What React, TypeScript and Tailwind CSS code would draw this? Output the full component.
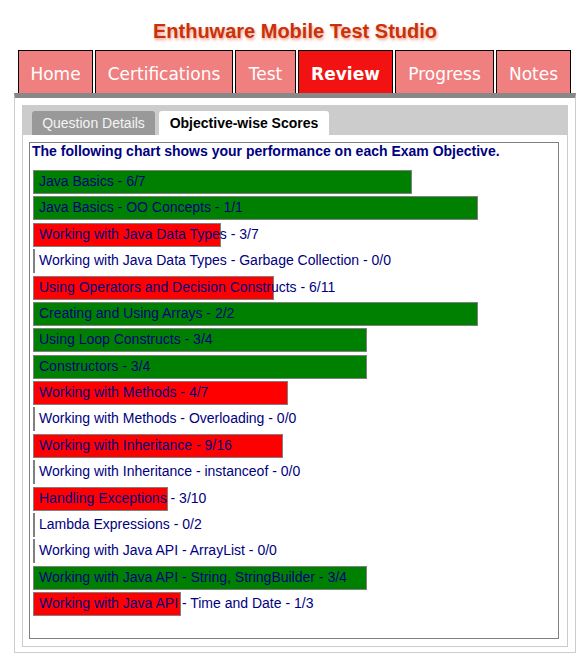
const tabs = [
  { label: 'Home', width: 'w-[75px]' },
  { label: 'Certifications', width: 'w-[138px]' },
  { label: 'Test', width: 'w-[61px]' },
  { label: 'Review', width: 'w-[95px]', active: true },
  { label: 'Progress', width: 'w-[99px]' },
  { label: 'Notes', width: 'w-[75px]' },
]

const objectives: [string, number, number][] = [
  ['Java Basics', 6, 7],
  ['Java Basics - OO Concepts', 1, 1],
  ['Working with Java Data Types', 3, 7],
  ['Working with Java Data Types - Garbage Collection', 0, 0],
  ['Using Operators and Decision Constructs', 6, 11],
  ['Creating and Using Arrays', 2, 2],
  ['Using Loop Constructs', 3, 4],
  ['Constructors', 3, 4],
  ['Working with Methods', 4, 7],
  ['Working with Methods - Overloading', 0, 0],
  ['Working with Inheritance', 9, 16],
  ['Working with Inheritance - instanceof', 0, 0],
  ['Handling Exceptions', 3, 10],
  ['Lambda Expressions', 0, 2],
  ['Working with Java API - ArrayList', 0, 0],
  ['Working with Java API - String, StringBuilder', 3, 4],
  ['Working with Java API - Time and Date', 1, 3],
]

function ScoreRow({ name, score, total }: { name: string; score: number; total: number }) {
  const pct = total > 0 ? Math.floor((score / total) * 100) : 0
  const passed = total > 0 && score / total >= 0.65
  return (
    <div className="grid h-6">
      <div
        className={`[grid-area:1/1] h-6 border border-[#808080] ${passed ? 'bg-[#008000]' : 'bg-[#ff0000]'}`}
        style={{ width: `${pct * 4.43 + 2}px` }}
      />
      <span className="[grid-area:1/1] pl-[6px] leading-[23px] text-[14px] text-[#000080] whitespace-nowrap">
        {name} - {score}/{total}
      </span>
    </div>
  )
}

export default function App() {
  return (
    <div className="min-h-[657px] bg-white font-['Liberation_Sans',Arial,sans-serif]">
      <div className="ml-[14px] w-[562px]">
        <h1 className="pt-[19px] mb-[7px] text-center text-[20px] leading-6 font-bold text-[#c93208] [text-shadow:1px_2px_3px_#f2a090]">
          Enthuware Mobile Test Studio
        </h1>

        <div className="flex gap-[2px] pl-[4px]">
          {tabs.map((t) => (
            <div
              key={t.label}
              className={`${t.width} h-[43px] flex items-center justify-center pt-[5px] border border-b-0 border-black font-['DejaVu_Sans',Verdana,sans-serif] text-[17px] text-white ${
                t.active ? 'bg-[#f21212] font-bold' : 'bg-[#f08080]'
              }`}
            >
              {t.label}
            </div>
          ))}
        </div>

        <div className="border border-[#cccccc] border-t-[5px] border-t-[#888888] pt-[7px] px-[7px] pb-[5px]">
          <div className="border border-[#cccccc]">
            <div className="flex gap-[4px] h-[29px] pt-[5px] pl-[9px] bg-[#cccccc]">
              <div className="w-[123px] h-6 flex items-center justify-center rounded-t-[3px] bg-[#999999] text-[14px] text-[#f4f4f4]">
                Question Details
              </div>
              <div className="w-[170px] h-6 flex items-center justify-center rounded-t-[3px] bg-white text-[14px] font-bold text-black">
                Objective-wise Scores
              </div>
            </div>

            <div className="ml-[6px] mr-[8px] mt-[7px] mb-[7px] h-[497px] border border-[#808080]">
              <p className="pl-[2px] text-[14px] leading-[17px] font-bold text-[#000080]">
                The following chart shows your performance on each Exam Objective.
              </p>
              <div className="mt-[10px] pl-[3px] flex flex-col gap-[2.375px]">
                {objectives.map(([name, score, total]) => (
                  <ScoreRow key={name} name={name} score={score} total={total} />
                ))}
              </div>
            </div>
          </div>
        </div>
      </div>
    </div>
  )
}
